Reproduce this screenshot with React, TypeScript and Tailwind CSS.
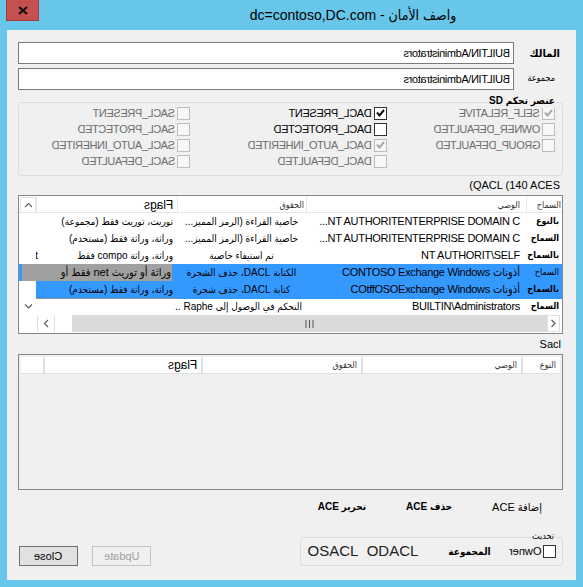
import React from "react";

type Row = {
  allow: string;
  strong: boolean;
  trustee: string;
  ltr?: boolean;
  rights: string;
  spill?: boolean;
  flags: string;
  mark?: boolean;
  sel?: "blue" | "grey";
};

const rows: Row[] = [
  {
    allow: "بالنوع",
    strong: true,
    trustee: "...NT AUTHORITENTERPRISE DOMAIN C",
    ltr: true,
    rights: "خاصية القراءة (الرمز المميز...",
    flags: "توريث، توريث فقط (مجموعة)",
  },
  {
    allow: "السماح",
    strong: true,
    trustee: "...NT AUTHORITENTERPRISE DOMAIN C",
    ltr: true,
    rights: "خاصية القراءة (الرمز المميز...",
    flags: "وراثة، وراثة فقط (مستخدم)",
  },
  {
    allow: "بالسماح",
    strong: true,
    trustee: "NT AUTHORIT\\SELF",
    ltr: true,
    rights: "تم استيفاء خاصية",
    flags: "وراثة، وراثة compo فقط",
    mark: true,
  },
  {
    allow: "السماح",
    strong: false,
    trustee: "أذونات CONTOSO Exchange Windows",
    rights: "الكتابة DACL، حذف الشجرة",
    flags: "وراثة أو توريث net فقط أو",
    sel: "grey",
  },
  {
    allow: "بالسماح",
    strong: true,
    trustee: "أذونات COtffOSOExchange Windows",
    rights: "كتابة DACL، حذف شجرة",
    flags: "وراثة، وراثة فقط (مستخدم)",
    sel: "blue",
  },
  {
    allow: "السماح",
    strong: true,
    trustee: "BUILTIN\\Administrators",
    ltr: true,
    rights: "التحكم في الوصول إلى Raphe ..",
    spill: true,
    flags: "",
  },
];

function Mirror({ children, className = "" }: { children: React.ReactNode; className?: string }) {
  return <span className={`inline-block -scale-x-100 whitespace-nowrap ${className}`}>{children}</span>;
}

function Chevron({ dir }: { dir: "up" | "down" | "left" | "right" }) {
  const vertical = dir === "up" || dir === "down";
  const d = {
    up: "M1 5 L4.5 1.5 L8 5",
    down: "M1 1.5 L4.5 5 L8 1.5",
    left: "M5 1 L1.5 4.5 L5 8",
    right: "M1.5 1 L5 4.5 L1.5 8",
  }[dir];
  return (
    <svg width={vertical ? 9 : 7} height={vertical ? 7 : 9} viewBox={vertical ? "0 0 9 7" : "0 0 7 9"}>
      <path d={d} fill="none" stroke="#606060" strokeWidth="1.2" />
    </svg>
  );
}

function Box({ checked = false, dim = false }: { checked?: boolean; dim?: boolean }) {
  return (
    <span
      className={`flex h-[13px] w-[13px] shrink-0 items-center justify-center border ${
        dim ? "border-[#bcbcbc] bg-[#f7f7f7]" : "border-[#333333] bg-white"
      }`}
    >
      {checked && (
        <svg width="9" height="8" viewBox="0 0 9 8">
          <path d="M1 3.5 L3.5 6.5 L8 1" fill="none" stroke={dim ? "#a8a8a8" : "#111111"} strokeWidth="2" />
        </svg>
      )}
    </span>
  );
}

function Opt({ label, checked, dim }: { label: string; checked?: boolean; dim?: boolean }) {
  return (
    <div className="flex h-[16px] items-center gap-[2px]">
      <Box checked={checked} dim={dim} />
      <Mirror className={`text-[11px] tracking-[-0.4px] ${dim ? "text-[#6d6d6d]" : "text-black"}`}>{label}</Mirror>
    </div>
  );
}

function DaclTable() {
  return (
    <div className="mt-[3px] flex flex-col border border-[#828790] bg-white pt-[1px] pb-[1px]">
      <div className="grid h-[16px] grid-cols-[36px_220px_129px_141px_17px] border-b border-[#e5e5e5] text-[9px] leading-[16px] text-[#333333]">
        <div className="border-l border-[#e5e5e5] pr-[1px]">السماح</div>
        <div className="border-l border-[#e5e5e5] pr-[6px]">الوصي</div>
        <div className="border-l border-[#e5e5e5] pr-[2px]">الحقوق</div>
        <div className="border-l border-[#e5e5e5] pr-[4px] text-[12px] text-black">
          <Mirror>Flags</Mirror>
        </div>
        <div className="ml-[1px] flex items-center justify-center border border-[#e5e5e5]">
          <Chevron dir="up" />
        </div>
      </div>
      {rows.map((r, i) => {
        const blue = r.sel ? "bg-[#3399ff]" : "";
        return (
          <div
            key={i}
            className="grid h-[17px] grid-cols-[36px_220px_129px_141px_17px] text-[11px] leading-[17px] text-black"
          >
            <div
              className={`overflow-hidden whitespace-nowrap pr-[3px] ${
                r.strong ? "text-[9px] font-bold" : "text-[9px]"
              } ${blue}`}
            >
              {r.allow}
            </div>
            <div className={`overflow-hidden whitespace-nowrap pr-[6px] tracking-[-0.3px] ${blue}`}>
              <span dir={r.ltr ? "ltr" : undefined}>{r.trustee}</span>
            </div>
            <div
              className={`whitespace-nowrap text-[10px] ${
                r.spill ? "pr-[4px]" : "overflow-hidden text-center"
              } ${blue}`}
            >
              {r.rights}
            </div>
            {r.sel === "grey" ? (
              <div className="col-span-2 bg-[#3399ff] pr-[5px] pl-[3px]">
                <div className="h-full overflow-hidden whitespace-nowrap bg-[#a0a0a0] pr-[1px] text-[11px] leading-[17px]">
                  {r.flags}
                </div>
              </div>
            ) : (
              <>
                <div
                  className={`flex justify-between whitespace-nowrap pr-[4px] text-[10px] ${blue} ${
                    r.sel === "blue" ? "border-b border-dotted border-[#d98a3a]" : ""
                  }`}
                >
                  <span>{r.flags}</span>
                  {r.mark && <span className="w-[2px] overflow-hidden text-[11px]">t</span>}
                </div>
                <div className="ml-[1px] flex items-center justify-center bg-white">
                  {i === rows.length - 1 && <Chevron dir="down" />}
                </div>
              </>
            )}
          </div>
        );
      })}
      <div className="flex h-[17px]">
        <div className="mr-[2px] flex w-[13px] items-center justify-center border border-[#e0e0e0] bg-white">
          <Chevron dir="right" />
        </div>
        <div className="flex flex-1 items-center justify-center bg-[#dadada]">
          <svg width="9" height="8" viewBox="0 0 9 8">
            <path d="M1 0 V8 M4.5 0 V8 M8 0 V8" stroke="#555555" strokeWidth="1" />
          </svg>
        </div>
        <div className="w-[17px] bg-white" />
        <div className="flex w-[18px] items-center justify-center border-x border-[#e0e0e0] bg-white">
          <Chevron dir="left" />
        </div>
        <div className="w-[18px] bg-white" />
      </div>
    </div>
  );
}

function SaclTable() {
  return (
    <div className="mt-[4px] h-[136px] border border-[#828790] bg-[#f0f0f0] px-[2px] pt-[2px]">
      <div className="grid h-[17px] grid-cols-[39px_160px_160px_158px_22px] border-b-2 border-[#e0e0e0] text-[9px] leading-[16px] text-[#333333]">
        <div className="border-l-2 border-[#e0e0e0] bg-white pr-[4px]">النوع</div>
        <div className="border-l-2 border-[#e0e0e0] bg-white pr-[4px]">الوصي</div>
        <div className="border-l-2 border-[#e0e0e0] bg-white pr-[4px]">الحقوق</div>
        <div className="border-l-2 border-[#e0e0e0] bg-white pr-[4px] text-[12px] text-black">
          <Mirror>Flags</Mirror>
        </div>
        <div className="bg-white" />
      </div>
    </div>
  );
}

export default function App() {
  return (
    <div className="flex h-[587px] w-[583px] flex-col bg-[#67c6ea] font-['Liberation_Sans','DejaVu_Sans_Condensed','DejaVu_Sans',sans-serif] text-black">
      <div className="flex h-[30px] shrink-0 items-start" dir="ltr">
        <div className="ml-[6px] flex h-[21px] w-[33px] items-center justify-center border-x border-b border-[#a33c3c] bg-[#c75050]">
          <svg width="10" height="9" viewBox="0 0 10 9">
            <path d="M1 1 L9 8 M9 1 L1 8" stroke="#111111" strokeWidth="2.2" />
          </svg>
        </div>
        <div className="flex h-full flex-1 items-center justify-center pl-[84px] text-[14px] leading-none">
          dc=contoso,DC.com - واصف الأمان
        </div>
      </div>

      <div dir="rtl" className="mx-[7px] mb-[7px] flex flex-1 flex-col bg-[#f0f0f0] pl-[11px] pr-[13px] pt-[12px] pb-[14px]">
        <div className="flex h-[22px] items-center">
          <div className="w-[49px] pr-[3px] text-[11px] font-bold">المالك</div>
          <div className="flex h-full flex-1 items-center border border-[#7a7a7a] bg-white pr-[3px]">
            <Mirror className="text-[11px] tracking-[-0.4px]">BUILTIN\Administrators</Mirror>
          </div>
        </div>
        <div className="mt-[4px] flex h-[22px] items-center">
          <div className="w-[49px] pr-[8px] text-[9px]">مجموعة</div>
          <div className="flex h-full flex-1 items-center border border-[#7a7a7a] bg-white pr-[3px]">
            <Mirror className="text-[11px] tracking-[-0.4px]">BUILTIN\Administrators</Mirror>
          </div>
        </div>

        <div className="relative mt-[12px] h-[74px] rounded-[3px] border border-[#dcdcdc] pr-[7px] pt-[2px]">
          <span className="absolute -top-[9px] right-[6px] bg-[#f0f0f0] px-[1px] text-[10px] font-bold leading-[14px]">
            عنصر تحكم SD
          </span>
          <div className="flex">
            <div className="w-[168px]">
              <Opt label="SELF_RELATIVE" checked dim />
              <Opt label="OWNER_DEFAULTED" dim />
              <Opt label="GROUP_DEFAULTED" dim />
            </div>
            <div className="w-[197px]">
              <Opt label="DACL_PRESENT" checked />
              <Opt label="DACL_PROTECTED" />
              <Opt label="DACL_AUTO_INHERITED" checked dim />
              <Opt label="DACL_DEFAULTED" dim />
            </div>
            <div>
              <Opt label="SACL_PRESENT" dim />
              <Opt label="SACL_PROTECTED" dim />
              <Opt label="SACL_AUTO_INHERITED" dim />
              <Opt label="SACL_DEFAULTED" dim />
            </div>
          </div>
        </div>

        <div className="mt-[2px] h-[14px] pr-[3px] text-[11px] leading-[14px]">
          <span dir="ltr">(QACL (140 ACES</span>
        </div>
        <DaclTable />

        <div className="mt-[4px] h-[12px] pr-[2px] text-[11px] leading-[12px]">Sacl</div>
        <SaclTable />

        <div className="mt-[10px] flex h-[14px] items-center gap-[40px] pr-[21px] text-[11px] leading-[14px]">
          <span>إضافة ACE</span>
          <span className="text-[10px] font-bold">حذف ACE</span>
          <span className="text-[10px] font-bold">تحرير ACE</span>
        </div>

        <div className="mt-[23px] flex items-end justify-between">
          <div className="relative flex h-[29px] w-[263px] items-center rounded-[3px] border border-[#dcdcdc] pr-[6px]">
            <span className="absolute -top-[8px] right-[7px] bg-[#f0f0f0] px-[1px] text-[9px] leading-[12px]">تحديث</span>
            <Box />
            <Mirror className="mr-[2px] text-[11px]">Owner</Mirror>
            <span className="mr-[18px] text-[10px] font-bold">المجموعة</span>
            <span className="mr-[30px] text-[15px] text-[#222222]">OSACL&nbsp;&nbsp;ODACL</span>
          </div>
          <div className="flex gap-[14px] pl-[1px]">
            <div className="flex h-[20px] w-[59px] items-center justify-center border border-[#c4c4c4] bg-[#f0f0f0] text-[11px] text-[#a0a0a0]">
              <Mirror>Update</Mirror>
            </div>
            <div className="flex h-[20px] w-[59px] items-center justify-center border border-[#707070] bg-[#e1e1e1] text-[11px]">
              <Mirror>Close</Mirror>
            </div>
          </div>
        </div>
      </div>
    </div>
  );
}
